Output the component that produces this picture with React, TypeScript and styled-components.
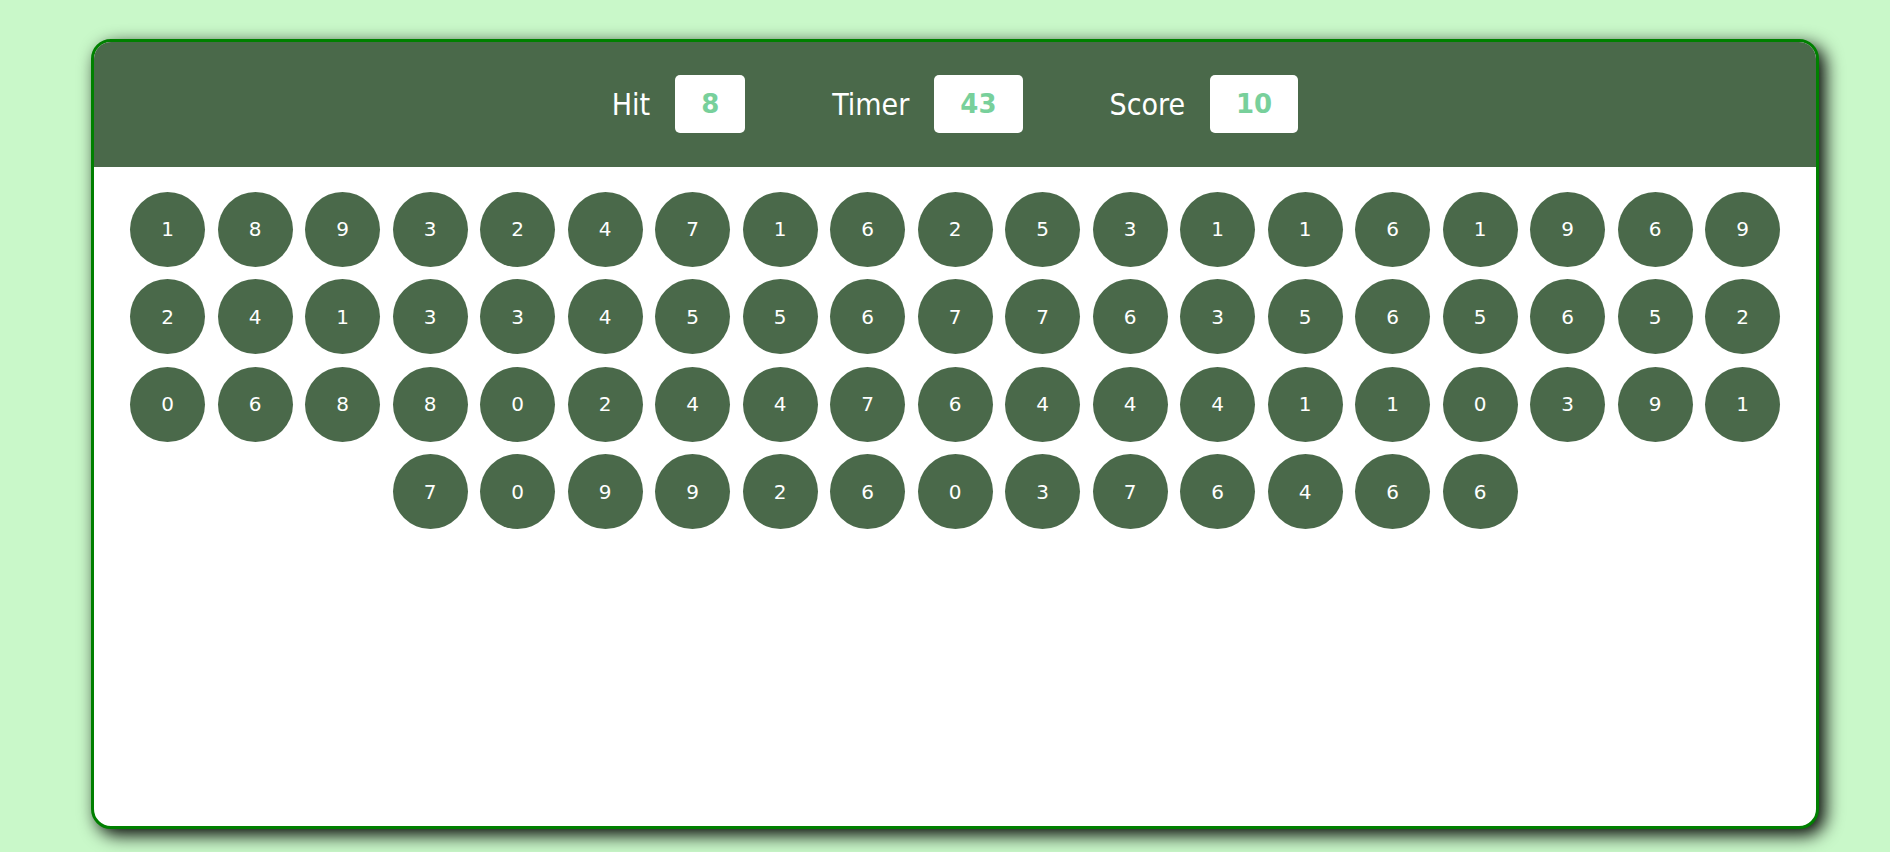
import React from "react";
import styled, { createGlobalStyle } from "styled-components";

const GlobalStyle = createGlobalStyle`
  html, body {
    margin: 0;
    padding: 0;
    background: #c9f8c9;
  }
  body {
    font-family: "DejaVu Sans", Verdana, sans-serif;
  }
`;

const Page = styled.div`
  width: 1890px;
  height: 852px;
  padding: 39px 0 0 91px;
  box-sizing: border-box;
  overflow: hidden;
`;

const Panel = styled.div`
  width: 1728px;
  height: 790px;
  box-sizing: border-box;
  border: 3px solid #008000;
  border-radius: 20px;
  background: #ffffff;
  overflow: hidden;
  box-shadow: 6px 6px 18px #000000;
  display: flex;
  flex-direction: column;
`;

const Header = styled.div`
  height: 124.5px;
  flex-shrink: 0;
  background: #4a694a;
  display: flex;
  align-items: center;
  justify-content: center;
  gap: 87px;
`;

const Stat = styled.div`
  display: flex;
  align-items: center;
  gap: 25px;
`;

const Label = styled.span`
  font-family: "DejaVu Sans Condensed", "DejaVu Sans", sans-serif;
  font-stretch: condensed;
  font-size: 30px;
  color: #ffffff;
`;

const Value = styled.span`
  height: 58px;
  padding: 0 26px;
  background: #ffffff;
  border-radius: 5px;
  display: flex;
  align-items: center;
  justify-content: center;
  font-family: "DejaVu Sans", Verdana, sans-serif;
  font-weight: bold;
  font-size: 26px;
  color: #78d09b;
`;

const Board = styled.div`
  padding: 25px 20px;
  display: flex;
  flex-wrap: wrap;
  justify-content: center;
  align-content: flex-start;
  gap: 12.5px;
`;

const Bubble = styled.div`
  width: 75px;
  height: 75px;
  border-radius: 50%;
  background: #4a694a;
  color: #ffffff;
  display: flex;
  align-items: center;
  justify-content: center;
  font-family: "DejaVu Sans", Verdana, sans-serif;
  font-size: 20px;
`;

const numbers = [
  1, 8, 9, 3, 2, 4, 7, 1, 6, 2, 5, 3, 1, 1, 6, 1, 9, 6, 9,
  2, 4, 1, 3, 3, 4, 5, 5, 6, 7, 7, 6, 3, 5, 6, 5, 6, 5, 2,
  0, 6, 8, 8, 0, 2, 4, 4, 7, 6, 4, 4, 4, 1, 1, 0, 3, 9, 1,
  7, 0, 9, 9, 2, 6, 0, 3, 7, 6, 4, 6, 6,
];

const stats = [
  { label: "Hit", value: "8" },
  { label: "Timer", value: "43" },
  { label: "Score", value: "10" },
];

export default function App() {
  return (
    <>
      <GlobalStyle />
      <Page>
        <Panel>
          <Header>
            {stats.map((s) => (
              <Stat key={s.label}>
                <Label>{s.label}</Label>
                <Value>{s.value}</Value>
              </Stat>
            ))}
          </Header>
          <Board>
            {numbers.map((n, i) => (
              <Bubble key={i}>{n}</Bubble>
            ))}
          </Board>
        </Panel>
      </Page>
    </>
  );
}
